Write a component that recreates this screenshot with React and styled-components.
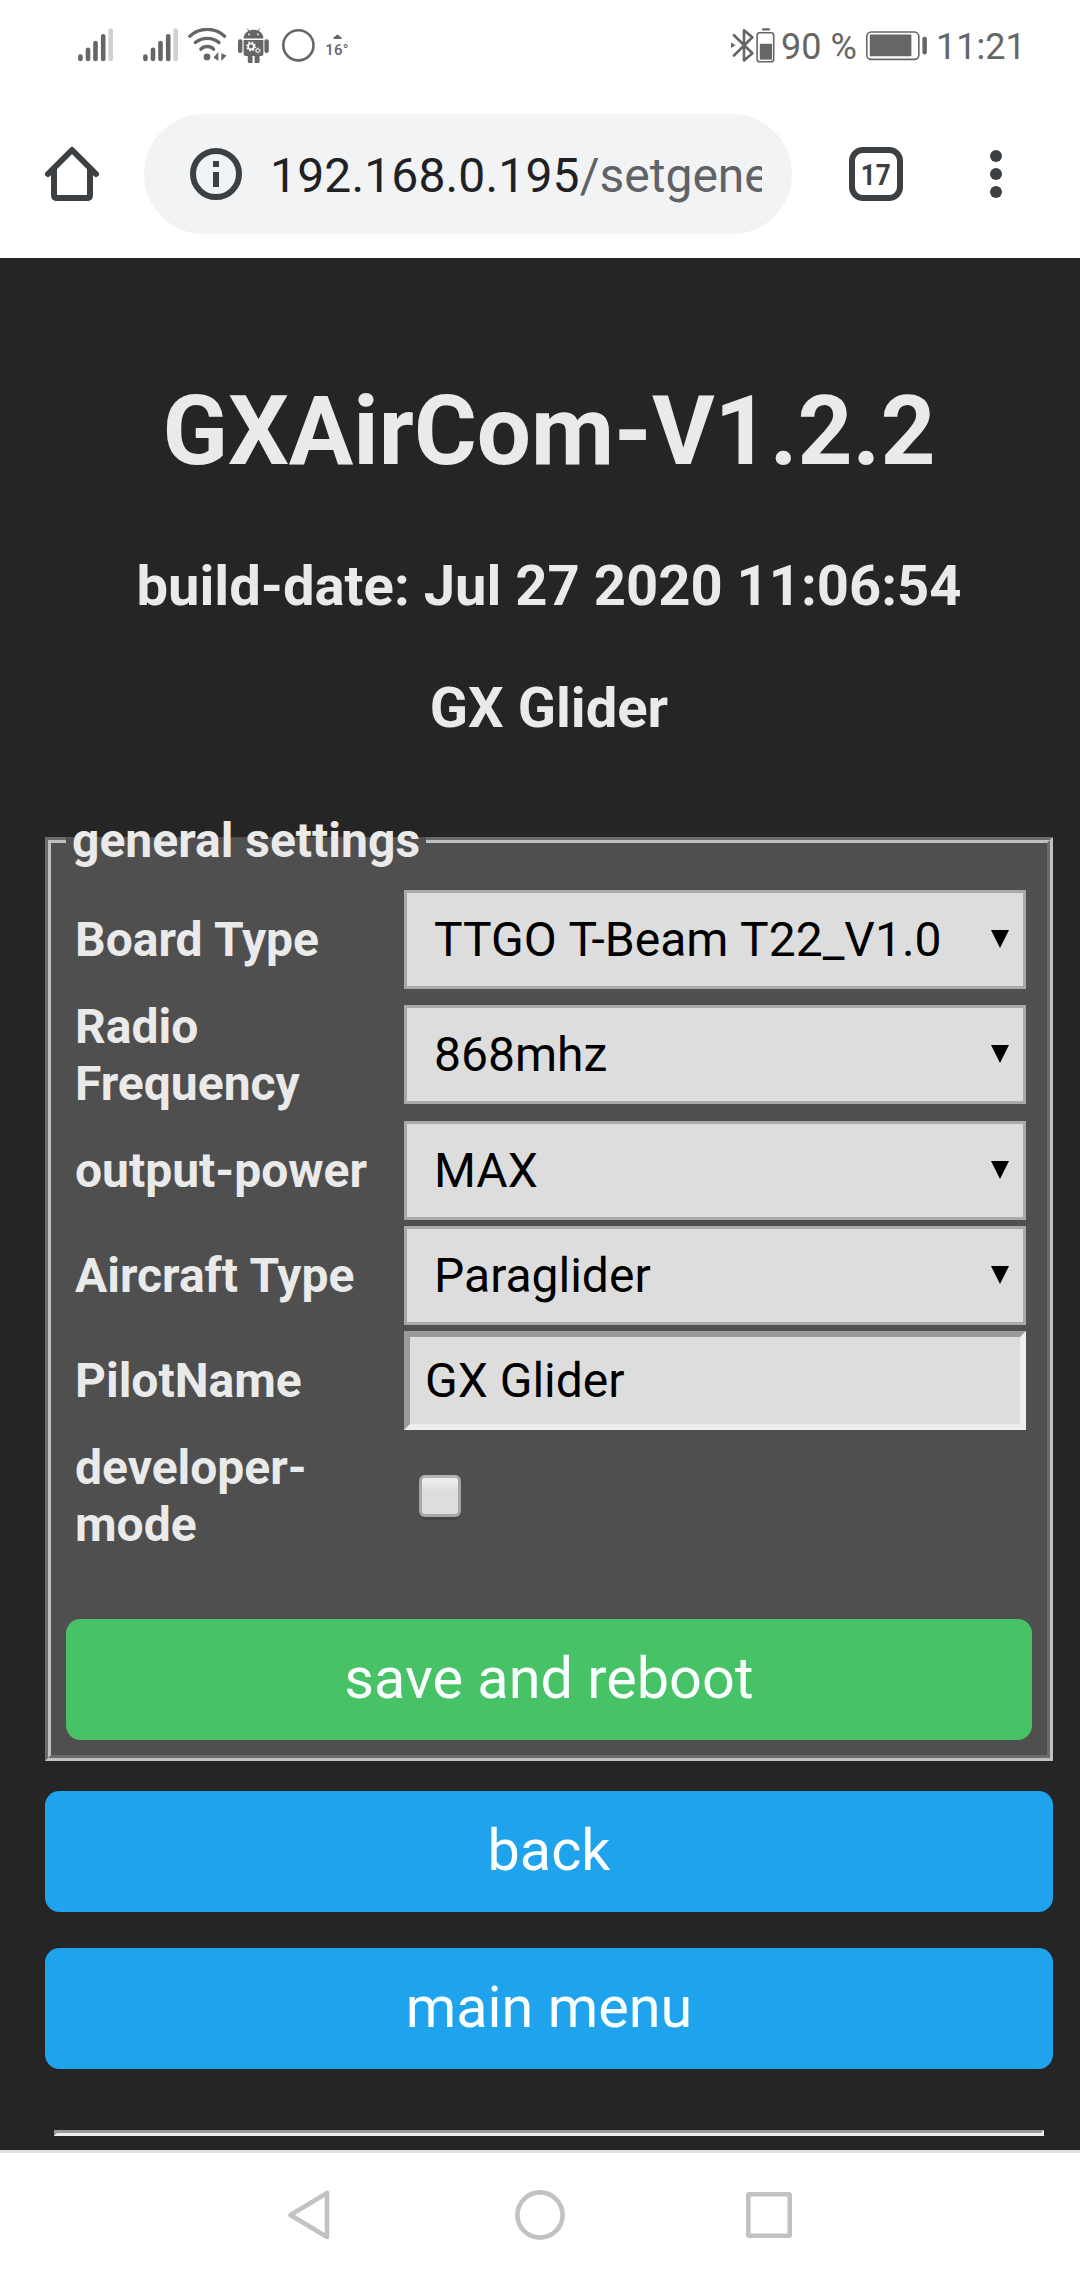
import React from "react";
import styled, { createGlobalStyle } from "styled-components";

const GlobalStyle = createGlobalStyle`
  html, body { margin: 0; padding: 0; }
  body {
    width: 1080px;
    background: #fff;
    font-family: Roboto, "Liberation Sans", sans-serif;
  }
  *, *::before, *::after { box-sizing: border-box; }
  svg { display: block; flex: none; }
`;

const Screen = styled.div`
  display: flex;
  flex-direction: column;
  width: 1080px;
  height: 2280px;
  overflow: hidden;
  background: #fff;
`;

/* ---------- Status bar ---------- */

const StatusBar = styled.div`
  display: flex;
  justify-content: space-between;
  height: 90px;
  padding: 28px 54px 26px 78px;
  color: #666;
`;

const StatusGroup = styled.div`
  display: flex;
  height: 36px;
`;

const StatusSlot = styled.div`
  flex: none;
  width: ${(p) => p.$width}px;
  margin-left: ${(p) => p.$gap || 0}px;
`;

const StatusText = styled.span`
  flex: none;
  width: ${(p) => p.$width}px;
  margin-left: ${(p) => p.$gap}px;
  font-size: 36px;
  line-height: 38px;
  white-space: nowrap;
`;

const Weather = styled.div`
  display: flex;
  flex-direction: column;
  align-items: center;
  width: 24px;
  margin-left: 10px;
  padding-top: 6px;
  font-size: 15px;
  font-weight: 500;
  line-height: 17px;
  letter-spacing: 0.2px;
  white-space: nowrap;

  svg { margin-bottom: 3px; }
`;

const SignalIcon = () => (
  <svg width="36" height="36" viewBox="0 0 36 36" strokeWidth="4.6" strokeLinecap="round" stroke="#666">
    <path d="M2.4 28.6V30.9M10 21.8V30.9M17.5 15V30.9M25.2 8.3V30.9" />
    <path d="M32.7 2.6V30.9" stroke="#d0d0d0" />
  </svg>
);

const WifiIcon = () => (
  <svg width="39" height="36" viewBox="0 0 39 36" fill="none" stroke="#666" strokeWidth="3.3" strokeLinecap="round">
    <path d="M1.8 8.2C12 -1 26.5 -1 36.6 8.2" />
    <path d="M7.4 14.6C14 9 24.5 9 31 14.6" />
    <path d="M12.8 21.2C16 17.6 22.4 17.6 25.6 21.2" />
    <circle cx="19" cy="28.9" r="3.4" fill="#666" stroke="none" />
    <path d="M25.5 29.6L30.3 24V33Z M33.3 25.2L38.6 27.4L33.3 33Z" fill="#666" stroke="none" />
  </svg>
);

const AndroidIcon = () => (
  <svg width="31" height="36" viewBox="0 0 31 36" fill="#666">
    <path d="M9.3 0.6L11.4 3.6M21.7 0.6L19.6 3.6" stroke="#666" strokeWidth="1" />
    <path d="M5.6 10.4C5.8 5.4 9.6 1.8 15.5 1.8S25.2 5.4 25.4 10.4Z" />
    <circle cx="11" cy="6.4" r="0.9" fill="#fff" />
    <circle cx="20" cy="6.4" r="0.9" fill="#fff" />
    <path d="M5.6 12H25.4V26Q25.4 28 23.4 28H7.6Q5.6 28 5.6 26Z" />
    <rect x="0" y="11.2" width="4.4" height="13.8" rx="2" />
    <rect x="26.4" y="11.2" width="4.4" height="13.8" rx="2" />
    <path d="M9.8 27H14.5V35H11.3Q9.8 35 9.8 33.5ZM16.6 27H21.6V33.5Q21.6 35 20.1 35H16.6Z" />
    <circle cx="13" cy="18.4" r="2.9" fill="none" stroke="#fff" strokeWidth="1.7" />
    <circle cx="13" cy="18.4" r="4.3" fill="none" stroke="#fff" strokeWidth="1.3" strokeDasharray="1.7 1.68" />
    <circle cx="19.8" cy="22.5" r="1.7" fill="none" stroke="#fff" strokeWidth="1" />
    <circle cx="19.8" cy="22.5" r="2.5" fill="none" stroke="#fff" strokeWidth="0.8" strokeDasharray="1 0.96" />
  </svg>
);

const RingIcon = () => (
  <svg width="33" height="36" viewBox="0 0 33 36">
    <circle cx="16.4" cy="17.3" r="15.1" fill="none" stroke="#666" strokeWidth="2.6" />
  </svg>
);

const CloudIcon = () => (
  <svg width="9" height="5" viewBox="0 0 9 5">
    <path d="M0.4 5Q0 2.8 2.2 2.6Q3.4 0 5.4 1.1Q6.4 1.4 6.6 2.4Q9 2.6 8.6 5Z" fill="#666" />
  </svg>
);

const BluetoothIcon = () => (
  <svg width="25" height="36" viewBox="0 0 25 36" fill="none" stroke="#666" strokeWidth="2.6">
    <path d="M2.2 6.5L21.4 25.2L13 32.4V2.2L21.4 9.3L2.2 28.2" strokeLinejoin="round" />
    <path d="M0 14.6L4.6 17.3L0 20Z" fill="#666" stroke="none" />
  </svg>
);

const DeviceBatteryIcon = () => (
  <svg width="19" height="36" viewBox="0 0 19 36">
    <rect x="6" y="0.3" width="8" height="2.3" rx="1" fill="#666" />
    <rect x="1.1" y="4.8" width="16.6" height="29" rx="2.6" fill="none" stroke="#666" strokeWidth="1.6" />
    <rect x="3.8" y="15.8" width="12.2" height="15.8" fill="#666" />
  </svg>
);

const BatteryIcon = () => (
  <svg width="62" height="36" viewBox="0 0 62 36">
    <rect x="0.8" y="4" width="52" height="27.4" rx="4.4" fill="none" stroke="#666" strokeWidth="1.6" />
    <rect x="3.8" y="6.6" width="41.6" height="21.7" rx="0.8" fill="#666" />
    <rect x="56.4" y="8.8" width="4.5" height="17.6" rx="1.8" fill="#666" />
  </svg>
);

/* ---------- Browser toolbar ---------- */

const Toolbar = styled.div`
  display: flex;
  align-items: center;
  height: 168px;
  padding: 0 78px 0 42px;
`;

const AddressBar = styled.div`
  display: flex;
  align-items: center;
  width: 648px;
  height: 120px;
  margin-left: 42px;
  padding: 0 30px 0 45px;
  border-radius: 60px;
  background: #f1f3f4;
`;

const Url = styled.div`
  flex: 1;
  margin-left: 27px;
  padding-top: 4px;
  overflow: hidden;
  color: #202124;
  font-size: 48px;
  line-height: 60px;
  letter-spacing: 0.15px;
  white-space: nowrap;
`;

const UrlPath = styled.span`
  color: #5f6368;
  letter-spacing: 0;
`;

const TabCounter = styled.div`
  display: flex;
  align-items: center;
  justify-content: center;
  width: 54px;
  height: 54px;
  margin-left: 57px;
  padding-top: 1px;
  border: 6px solid #3c4043;
  border-radius: 14px;
  color: #3c4043;
  font-size: 29px;
  font-weight: 700;
  line-height: 42px;
`;

const TabCount = styled.span`
  transform: scaleX(0.9);
`;

const MenuDots = styled.div`
  display: grid;
  gap: 6px;
  margin-left: 87px;
`;

const Dot = styled.i`
  width: 12px;
  height: 12px;
  border-radius: 50%;
  background: #3c4043;
`;

const HomeIcon = () => (
  <svg width="60" height="60" viewBox="0 0 60 60" fill="none" stroke="#3c4043" strokeWidth="6">
    <path d="M6 30L30 6L54 30" strokeLinecap="round" strokeLinejoin="round" />
    <path d="M12 24V51Q12 54 15 54H45Q48 54 48 51V24" />
  </svg>
);

const InfoIcon = () => (
  <svg width="54" height="54" viewBox="0 0 54 54">
    <circle cx="27" cy="27" r="23" fill="none" stroke="#3c4043" strokeWidth="6" />
    <path d="M24 14H30V20H24ZM24 25H30V40H24Z" fill="#3c4043" />
  </svg>
);

/* ---------- Web page ---------- */

const Page = styled.main`
  display: flex;
  flex-direction: column;
  height: 1892px;
  padding: 117px 27px 0 45px;
  overflow: hidden;
  background: #252525;
  color: #eaeaea;
`;

const Title = styled.h1`
  margin: 0;
  font-size: 96px;
  line-height: 112px;
  text-align: center;
`;

const Subtitle = styled.h3`
  margin: ${(p) => p.$top}px 0 0;
  font-size: 56.16px;
  line-height: 66px;
  text-align: center;
`;

const Settings = styled.fieldset`
  min-width: 0;
  height: 950px;
  margin: 70px 0 0;
  padding: 0 15px;
  border: 6px groove #c0c0c0;
  background: #4f4f4f;
`;

const Legend = styled.legend`
  padding: 2px 6px 0;
  font-size: 48px;
  font-weight: 700;
  line-height: 56px;
`;

const Rows = styled.div`
  display: grid;
  gap: 6px;
  padding: 21px 6px 0 9px;
`;

const Row = styled.div`
  display: grid;
  grid-template-columns: 329px 622px;
  align-items: center;
  height: ${(p) => (p.$tall ? 120 : 99)}px;
  padding-bottom: ${(p) => p.$nudge || 0}px;
`;

const Label = styled.label`
  padding-right: 24px;
  font-size: 48px;
  font-weight: 700;
  line-height: 57px;
  word-spacing: 0.8px;
`;

const SelectBox = styled.div`
  position: relative;
  height: 99px;

  svg {
    position: absolute;
    top: 40px;
    right: 17px;
    pointer-events: none;
  }
`;

const Select = styled.select`
  display: block;
  width: 100%;
  height: 99px;
  margin: 0;
  padding: 0 50px 0 27px;
  appearance: none;
  border: 3px solid #a9a9a9;
  border-radius: 0;
  background: #ddd;
  color: #000;
  font: 400 48px/57px Roboto, sans-serif;
  word-spacing: 0.7px;
`;

const TextInput = styled.input`
  display: block;
  width: 100%;
  height: 99px;
  margin: 0;
  padding: 0 15px;
  border: 6px solid;
  border-color: #9a9a9a #eee #eee #9a9a9a;
  border-radius: 0;
  background: #ddd;
  color: #000;
  font: 400 48px/57px Roboto, sans-serif;
`;

const Checkbox = styled.input.attrs({ type: "checkbox" })`
  width: 42px;
  height: 42px;
  margin: 0 0 0 15px;
  appearance: none;
  border: 3px solid #a6a6a6;
  border-top-color: #b4b4b4;
  border-radius: 6px;
  background: linear-gradient(#ededed 0, #ededed 4px, #ddd 13px, #ddd 100%);
  box-shadow: 0 3px 1px rgba(0, 0, 0, 0.12);
`;

const Button = styled.button`
  display: block;
  width: 100%;
  height: 121px;
  margin: ${(p) => p.$top}px 0 0;
  padding: 0 0 2px;
  flex: none;
  border: 0;
  border-radius: 14.4px;
  background: ${(p) => (p.$green ? "#47c266" : "#1fa3ec")};
  color: #faffff;
  font: 400 57.6px/119px Roboto, sans-serif;
`;

const Divider = styled.hr`
  flex: none;
  width: 990px;
  height: 6px;
  margin: 61px auto 0;
  border: solid;
  border-width: 3px;
  border-color: #9a9a9a #eee #eee #9a9a9a;
`;

const ArrowIcon = () => (
  <svg width="18" height="18" viewBox="0 0 18 18">
    <path d="M0 0H18L9 18Z" />
  </svg>
);

/* ---------- Navigation bar ---------- */

const NavBar = styled.nav`
  display: flex;
  justify-content: center;
  gap: 179px;
  height: 130px;
  padding-top: 37px;
  border-top: 3px solid #e0e0e0;
  background: #fff;
`;

const NavIcon = ({ children }) => (
  <svg width="50" height="50" viewBox="0 0 50 50" fill="none" stroke="#c2c2c2" strokeWidth="4.6" strokeLinejoin="round">
    {children}
  </svg>
);

const fields = [
  { label: "Board Type", value: "TTGO T-Beam T22_V1.0" },
  { label: "Radio Frequency", value: "868mhz", tall: true },
  { label: "output-power", value: "MAX" },
  { label: "Aircraft Type", value: "Paraglider" },
];

export default function App() {
  return (
    <>
      <GlobalStyle />
      <Screen>
        <StatusBar>
          <StatusGroup>
            <StatusSlot $width={35}><SignalIcon /></StatusSlot>
            <StatusSlot $width={35} $gap={30}><SignalIcon /></StatusSlot>
            <StatusSlot $width={39} $gap={10}><WifiIcon /></StatusSlot>
            <StatusSlot $width={31} $gap={11}><AndroidIcon /></StatusSlot>
            <StatusSlot $width={33} $gap={13}><RingIcon /></StatusSlot>
            <Weather><CloudIcon />16°</Weather>
          </StatusGroup>
          <StatusGroup>
            <StatusSlot $width={25}><BluetoothIcon /></StatusSlot>
            <StatusSlot $width={19}><DeviceBatteryIcon /></StatusSlot>
            <StatusText $width={80} $gap={6}>90 %</StatusText>
            <StatusSlot $width={62} $gap={5}><BatteryIcon /></StatusSlot>
            <StatusText $width={90} $gap={8}>11:21</StatusText>
          </StatusGroup>
        </StatusBar>

        <Toolbar>
          <HomeIcon />
          <AddressBar>
            <InfoIcon />
            <Url>192.168.0.195<UrlPath>/setgene</UrlPath></Url>
          </AddressBar>
          <TabCounter><TabCount>17</TabCount></TabCounter>
          <MenuDots><Dot /><Dot /><Dot /></MenuDots>
        </Toolbar>

        <Page>
          <Title>GXAirCom-V1.2.2</Title>
          <Subtitle $top={66}>build-date: Jul 27 2020 11:06:54</Subtitle>
          <Subtitle $top={56}>GX Glider</Subtitle>
          <Settings>
            <Legend>general settings</Legend>
            <Rows>
              {fields.map((f) => (
                <Row key={f.label} $tall={f.tall} $nudge={f.tall ? 1 : 0}>
                  <Label>{f.label}</Label>
                  <SelectBox>
                    <Select defaultValue={f.value}>
                      <option>{f.value}</option>
                    </Select>
                    <ArrowIcon />
                  </SelectBox>
                </Row>
              ))}
              <Row>
                <Label>PilotName</Label>
                <TextInput defaultValue="GX Glider" />
              </Row>
              <Row $tall>
                <Label>developer-mode</Label>
                <Checkbox />
              </Row>
            </Rows>
            <Button $green $top={63}>save and reboot</Button>
          </Settings>
          <Button $top={30}>back</Button>
          <Button $top={36}>main menu</Button>
          <Divider />
        </Page>

        <NavBar>
          <NavIcon><path d="M4.5 25L41 3V47Z" /></NavIcon>
          <NavIcon><circle cx="25" cy="25" r="22.6" /></NavIcon>
          <NavIcon><rect x="4.3" y="4.3" width="41.4" height="41.4" rx="1" /></NavIcon>
        </NavBar>
      </Screen>
    </>
  );
}
